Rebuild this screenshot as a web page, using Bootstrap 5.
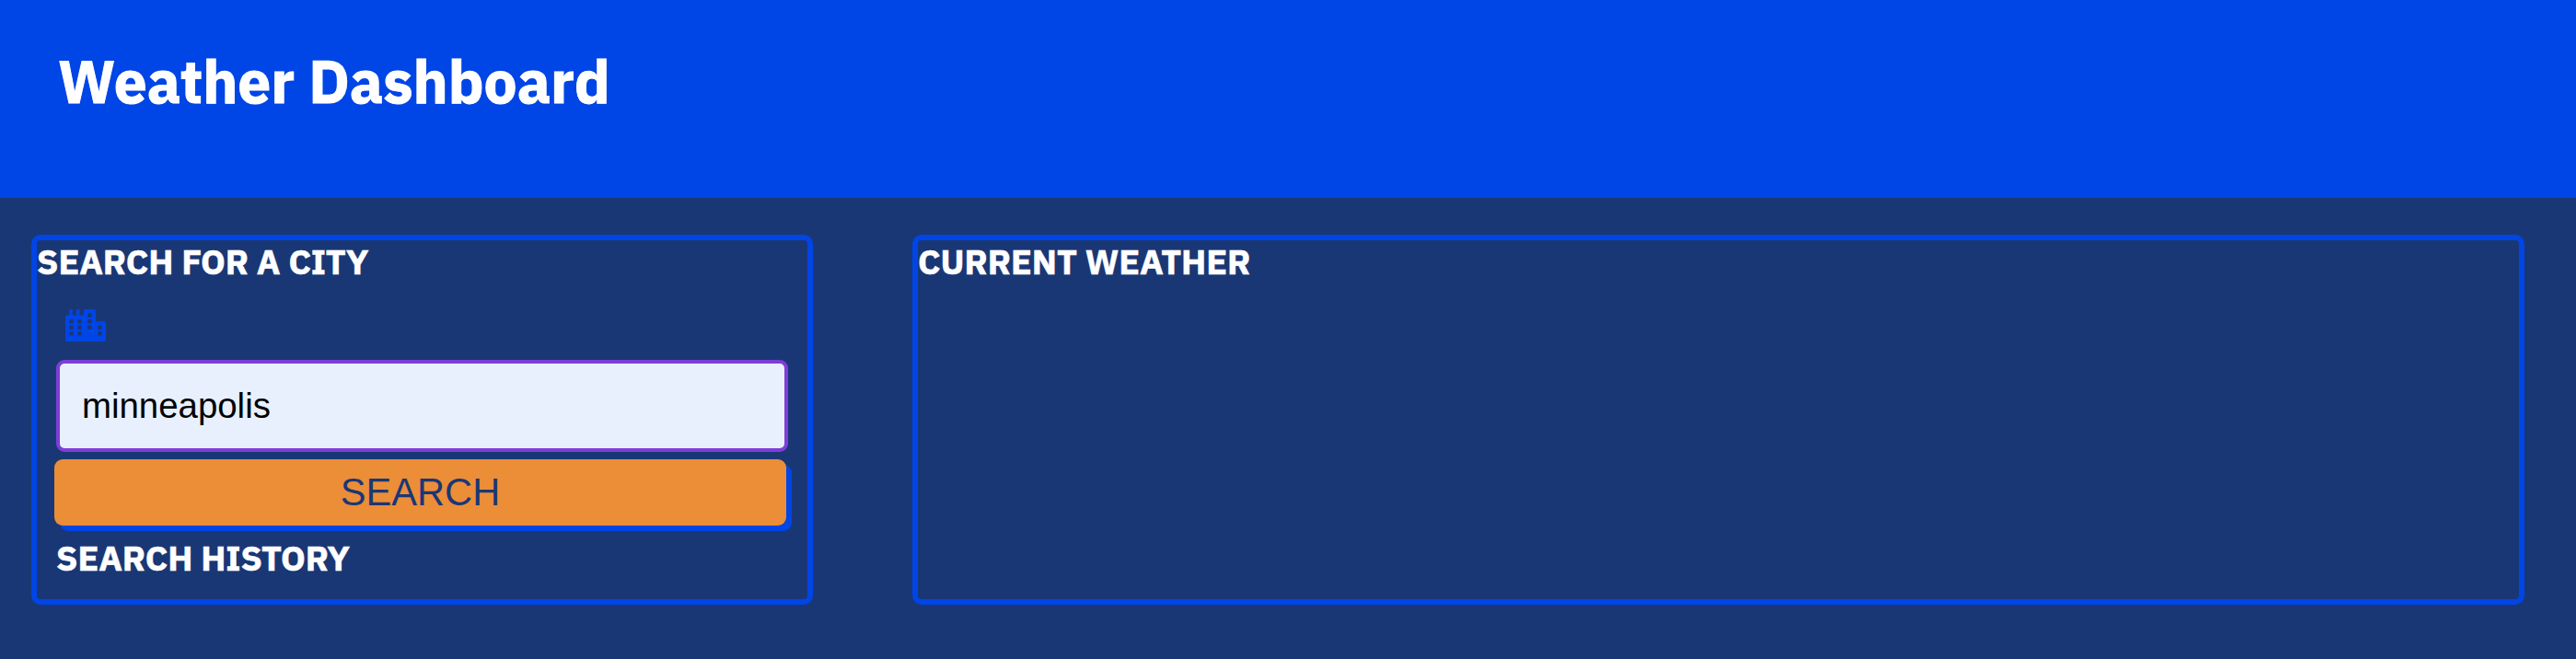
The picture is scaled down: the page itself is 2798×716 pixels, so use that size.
<!DOCTYPE html>
<html lang="en">
<head>
<meta charset="utf-8">
<title>Weather Dashboard</title>
<link href="https://cdn.jsdelivr.net/npm/bootstrap@5.3.0/dist/css/bootstrap.min.css" rel="stylesheet">
<style>
body { background: #1a3775; color: #fff; font-family: "IBM Plex Sans", Roboto, "Noto Sans", sans-serif; }
.site-header { background: #0045e6; height: 215px; padding: 50px 63px 0; }
.site-header h1 { font-size: 64px; line-height: 76px; -webkit-text-stroke: 1px #fff; }
.page-main { padding: 40px 56px 0 34px; gap: 108px; }
.panel { border: 6px solid #0045e6; border-radius: 10px; height: 402px; }
.search-panel { width: 849px; }
.panel h2 { font-size: 37.5px; line-height: 46px; padding-bottom: 2px; -webkit-text-stroke: .6px #fff; }
.search-body { padding: 0 21px; }
.city-row { height: 82px; padding: 27px 0 0 10px; }
.city-row svg { width: 44px; height: 35.2px; fill: #0045e6; }
.city-input, .city-input:focus { height: 100px; border: 4px solid #7f3ed6; border-radius: 9px; background: #e8f0fe; color: #000; font: 38.4px "Liberation Sans", Arial, sans-serif; padding: 0 24px; box-shadow: none; }
.search-btn, .search-btn:hover { height: 72px; margin: 8px 2px 12px -2px; border: 0; border-radius: 9px; background: #ec8d38; color: #1a3775; box-shadow: 6px 6px 0 #0045e6; font: 41.6px/71px "Liberation Sans", Arial, sans-serif; padding: 0 0 1px; }
</style>
</head>
<body>
<header class="site-header">
  <h1 class="fw-bold m-0">Weather Dashboard</h1>
</header>
<main class="page-main d-flex">
  <section class="panel search-panel flex-shrink-0">
    <h2 class="fw-bold m-0">SEARCH FOR A CITY</h2>
    <form class="search-body d-flex flex-column">
      <div class="city-row d-flex">
        <svg viewBox="0 0 640 512" aria-hidden="true"><path fill-rule="evenodd" d="M616 192H480V24c0-13.26-10.74-24-24-24H312c-13.26 0-24 10.74-24 24v72h-64V16c0-8.84-7.16-16-16-16h-16c-8.84 0-16 7.16-16 16v80h-64V16c0-8.84-7.16-16-16-16H80c-8.84 0-16 7.16-16 16v80H24c-13.26 0-24 10.74-24 24v360c0 17.67 14.33 32 32 32h576c17.67 0 32-14.33 32-32V216c0-13.26-10.75-24-24-24z
M76 160h40q12 0 12 12v40q0 12-12 12H76q-12 0-12-12v-40q0-12 12-12z M76 256h40q12 0 12 12v40q0 12-12 12H76q-12 0-12-12v-40q0-12 12-12z M76 352h40q12 0 12 12v40q0 12-12 12H76q-12 0-12-12v-40q0-12 12-12z
M204 160h40q12 0 12 12v40q0 12-12 12h-40q-12 0-12-12v-40q0-12 12-12z M204 256h40q12 0 12 12v40q0 12-12 12h-40q-12 0-12-12v-40q0-12 12-12z M204 352h40q12 0 12 12v40q0 12-12 12h-40q-12 0-12-12v-40q0-12 12-12z
M364 64h40q12 0 12 12v40q0 12-12 12h-40q-12 0-12-12V76q0-12 12-12z M364 160h40q12 0 12 12v40q0 12-12 12h-40q-12 0-12-12v-40q0-12 12-12z M364 256h40q12 0 12 12v40q0 12-12 12h-40q-12 0-12-12v-40q0-12 12-12z
M524 256h40q12 0 12 12v40q0 12-12 12h-40q-12 0-12-12v-40q0-12 12-12z M524 352h40q12 0 12 12v40q0 12-12 12h-40q-12 0-12-12v-40q0-12 12-12z"/></svg>
      </div>
      <input class="form-control city-input" type="text" value="minneapolis" aria-label="City">
      <button class="btn search-btn" type="button">SEARCH</button>
      <h2 class="fw-bold m-0">SEARCH HISTORY</h2>
    </form>
  </section>
  <section class="panel flex-grow-1">
    <h2 class="fw-bold m-0">CURRENT WEATHER</h2>
  </section>
</main>
<script src="https://cdn.jsdelivr.net/npm/bootstrap@5.3.0/dist/js/bootstrap.bundle.min.js"></script>
</body>
</html>
